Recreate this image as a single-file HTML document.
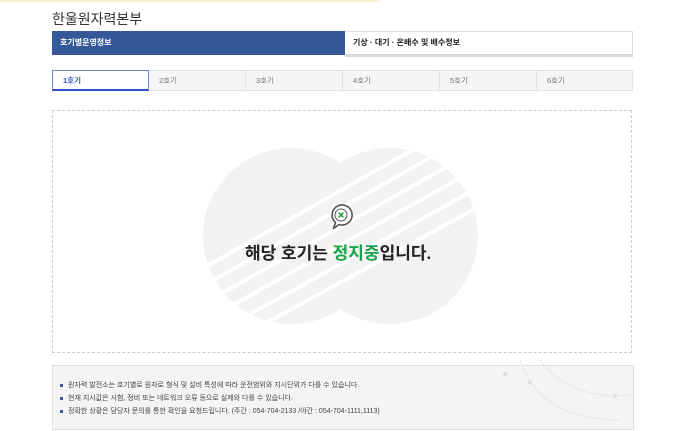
<!DOCTYPE html>
<html><head><meta charset="utf-8"><style>
body{margin:0;width:680px;height:431px;overflow:hidden;background:#fff;font-family:"Liberation Sans","Noto Sans CJK KR",sans-serif;position:relative}
.a{position:absolute}
.tab{position:absolute;top:70px;height:19px;width:96px;background:#f5f5f5;border:1px solid #e2e2e2;border-left:none;font-size:7.5px;color:#777;line-height:19px;text-indent:10px;box-sizing:content-box}
.note li{margin:0 0 6px 0;font-size:7px;color:#444;list-style:none;position:relative;padding-left:8px;line-height:7px}
.note li:before{content:"";position:absolute;left:0;top:2px;width:3px;height:3px;background:#3a5a9c}
</style></head><body>
<div class="a" style="left:0;top:0;width:380px;height:2px;background:#f6f0d4"></div>
<div class="a" style="left:52px;top:9px;font-size:14px;color:#333">한울원자력본부</div>
<div class="a" style="left:52px;top:31px;width:293px;height:24px;background:#345898;color:#fff;font-size:8px;font-weight:bold;line-height:24px;text-indent:8px">호기별운영정보</div>
<div class="a" style="left:345px;top:31px;width:287px;height:22px;border:1px solid #ddd;border-bottom:3px solid #d8d8d8;border-left:none;font-size:8px;font-weight:bold;color:#222;line-height:22px;text-indent:8px">기상 · 대기 · 온배수 및 배수정보</div>
<div class="tab" style="left:52px;width:95px;background:#fff;border:1px solid #6c8ad0;border-bottom:2px solid #2f55c0;height:18px;color:#2f55c0;font-weight:bold;text-indent:10px">1호기</div>
<div class="tab" style="left:149px">2호기</div>
<div class="tab" style="left:246px">3호기</div>
<div class="tab" style="left:343px">4호기</div>
<div class="tab" style="left:440px">5호기</div>
<div class="tab" style="left:537px;width:95px">6호기</div>
<div class="a" style="left:52px;top:110px;width:578px;height:241px;border:1px dashed #ccc"></div>
<svg class="a" style="left:0;top:0" width="680" height="431">
<defs><clipPath id="c"><circle cx="291" cy="236" r="88"/><circle cx="390" cy="236" r="88"/></clipPath></defs>
<circle cx="291" cy="236" r="88" fill="#f2f2f2"/><circle cx="390" cy="236" r="88" fill="#f2f2f2"/>
<g clip-path="url(#c)" stroke="#fff" stroke-width="4">
<line x1="200" y1="270" x2="430" y2="140"/><line x1="205" y1="285" x2="440" y2="152"/><line x1="210" y1="300" x2="450" y2="165"/><line x1="215" y1="315" x2="460" y2="178"/><line x1="225" y1="328" x2="470" y2="192"/><line x1="235" y1="340" x2="480" y2="206"/>
</g>
<path d="M335.5 222.5 A10 10 0 1 1 339 224.5 L333.5 228.5 Z" fill="#fff" stroke="#555" stroke-width="1.6" stroke-linejoin="round"/>
<circle cx="341" cy="215" r="6" fill="none" stroke="#555" stroke-width="1"/>
<path d="M338.7 212.7l4.6 4.6M343.3 212.7l-4.6 4.6" stroke="#1aa34a" stroke-width="1.6"/>
<circle cx="505" cy="374" r="2" fill="#ddd"/><circle cx="530" cy="382" r="2" fill="#ddd"/><circle cx="615" cy="396" r="2" fill="#ddd"/>
<path d="M520 360 Q540 420 620 420" fill="none" stroke="#e6e6e6"/><path d="M540 360 Q570 400 630 395" fill="none" stroke="#e6e6e6"/>
</svg>
<div class="a" style="left:245px;top:239px;font-size:17px;font-weight:bold;color:#222;white-space:nowrap">해당 호기는 <span style="color:#1aa34a">정지중</span>입니다.</div>
<div class="a" style="left:52px;top:365px;width:580px;height:63px;background:#f4f4f4;border:1px dotted #ccc;z-index:-1"></div>
<ul class="note a" style="left:60px;top:382px;margin:0;padding:0">
<li>원자력 발전소는 호기별로 원자로 형식 및 설비 특성에 따라 운전범위와 지시단위가 다를 수 있습니다.</li>
<li>현재 지시값은 시험, 정비 또는 네트워크 오류 등으로 실제와 다를 수 있습니다.</li>
<li>정확한 상황은 담당자 문의를 통한 확인을 요청드립니다. (주간 : 054-704-2133 /야간 : 054-704-1111,1113)</li>
</ul>
</body></html>
